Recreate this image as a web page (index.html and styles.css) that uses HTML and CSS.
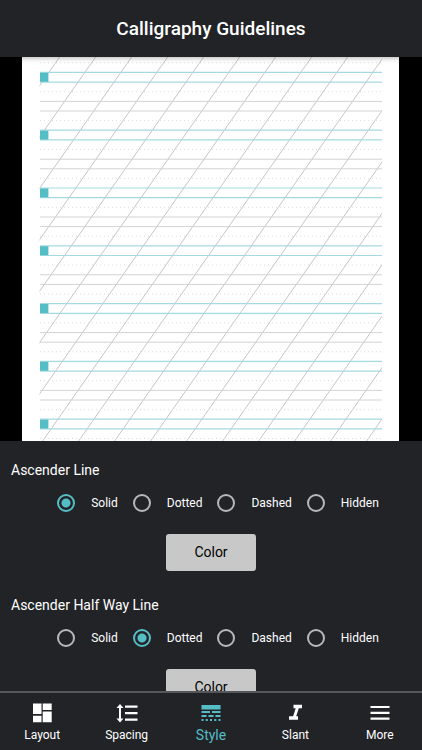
FILE: index.html
```
<!DOCTYPE html>
<html lang="en">
  <head>
    <meta charset="UTF-8" />
    <meta name="viewport" content="width=device-width, initial-scale=1.0" />
    <title>Calligraphy Guidelines</title>
    <link rel="stylesheet" href="styles.css">
  </head>
  <body>
    <header class="header">
      <h1>Calligraphy Guidelines</h1>
    </header>

    <div class="preview">
      <svg class="sheet" viewBox="0 0 377 384" role="img" aria-label="Guideline preview">
        <defs>
          <clipPath id="area">
            <rect x="17.5" y="0" width="342.5" height="384" />
          </clipPath>
          <g id="staff">
            <path class="main" d="M18 0H360M18 9.7H360" />
            <path class="dotted" d="M18 19.3H361M18 48.2H361" />
            <path class="minor" d="M18 29H360M18 38.6H360" />
            <rect class="nib" x="18" y="0.4" width="8.4" height="9" />
          </g>
        </defs>
        <path class="dotted" d="M18 5.8H361" />
        <g clip-path="url(#area)">
          <path class="slant" d="M37.6 0l-269 384M73.6 0l-269 384M109.6 0l-269 384M145.6 0l-269 384M181.6 0l-269 384M217.6 0l-269 384M253.6 0l-269 384M289.6 0l-269 384M325.6 0l-269 384M361.6 0l-269 384M397.6 0l-269 384M433.6 0l-269 384M469.6 0l-269 384M505.6 0l-269 384M541.6 0l-269 384M577.6 0l-269 384M613.6 0l-269 384" />
        </g>
        <use href="#staff" y="15.4" />
        <use href="#staff" y="73.2" />
        <use href="#staff" y="131" />
        <use href="#staff" y="188.8" />
        <use href="#staff" y="246.6" />
        <use href="#staff" y="304.4" />
        <use href="#staff" y="362.2" />
      </svg>
    </div>

    <main class="settings">
      <fieldset class="setting">
        <legend>Ascender Line</legend>
        <div class="options">
          <label><input type="radio" name="ascender" checked />Solid</label>
          <label><input type="radio" name="ascender" />Dotted</label>
          <label><input type="radio" name="ascender" />Dashed</label>
          <label><input type="radio" name="ascender" />Hidden</label>
        </div>
        <button type="button" class="color-btn">Color</button>
      </fieldset>

      <fieldset class="setting">
        <legend>Ascender Half Way Line</legend>
        <div class="options">
          <label><input type="radio" name="halfway" />Solid</label>
          <label><input type="radio" name="halfway" checked />Dotted</label>
          <label><input type="radio" name="halfway" />Dashed</label>
          <label><input type="radio" name="halfway" />Hidden</label>
        </div>
        <button type="button" class="color-btn">Color</button>
      </fieldset>
    </main>

    <nav class="tabs">
      <a href="#layout" class="tab">
        <svg viewBox="0 0 24 24"><path d="M3 2.5h8.500v10.500h-8.500zM12.700 2.500h9v6.500h-9zM3 14.800h8.500v6.500h-8.500zM12.700 10.500h9v10.800h-9z" /></svg>
        Layout
      </a>
      <a href="#spacing" class="tab">
        <svg viewBox="0 0 24 24"><path d="M6 7h2.500L5 3 1.500 7H4v10.500H1.500L5 21.500 8.500 17.500H6V7zm4-2.500v2.200h12.500V4.500H10zm0 15.300h12.500v-2.200H10v2.200zm0-6.600h12.500v-2.200H10v2.200z" /></svg>
        Spacing
      </a>
      <a href="#style" class="tab active">
        <svg viewBox="0 0 24 24"><path d="M2.500 4h19v4.500h-19zM2.500 10h8.500v2h-8.500zM13 10h8.500v2H13zM2.500 14h5v2h-5zM9.500 14h5v2h-5zM16.500 14h5v2h-5zM2.500 18h2v2h-2zM6.750 18h2v2h-2zM11 18h2v2h-2zM15.250 18h2v2h-2zM19.500 18h2v2h-2z" /></svg>
        Style
      </a>
      <a href="#slant" class="tab">
        <svg viewBox="0 0 24 24"><path d="M10.500 3.800v3.400h2.200l-2.600 8H6v3.500h9v-3.500h-1.800l2.600-8H19V3.800z" /></svg>
        Slant
      </a>
      <a href="#more" class="tab">
        <svg viewBox="0 0 24 24"><path d="M2.500 16.500h19v2.200h-19zM2.500 10.700h19v2.200h-19zM2.500 4.900h19v2.200h-19z" /></svg>
        More
      </a>
    </nav>
  </body>
</html>
```
FILE: styles.css
```
* {
  box-sizing: border-box;
}

body {
  display: flex;
  flex-direction: column;
  height: 100vh;
  margin: 0;
  background: #222327;
  color: white;
  font-family: Roboto, "Liberation Sans", sans-serif;
  overflow: hidden;
}

.header {
  position: relative;
  flex: none;
  padding: 16px 0 15px;
  text-align: center;
  box-shadow: 0 1px 5px rgba(0, 0, 0, 0.3);
}

.header h1 {
  margin: 0;
  font-size: 19px;
  line-height: 26px;
  font-weight: 500;
}

.preview {
  flex: none;
  padding: 0 23px 0 22px;
  background: black;
}

.sheet {
  display: block;
  width: 100%;
  background: white;
  fill: none;
}

.main {
  stroke: #a6d9df;
  stroke-width: 1.2;
}

.minor {
  stroke: #d3d3d5;
}

.dotted {
  stroke: #dddddf;
  stroke-dasharray: 1 3;
}

.slant {
  stroke: #c6c6c8;
}

.nib {
  fill: #55bdc6;
}

.settings {
  flex: 1;
  min-height: 0;
  padding: 20px 11px;
  overflow-y: auto;
  scrollbar-width: none;
}

.setting {
  min-width: 0;
  margin: 0 0 25px;
  padding: 0;
  border: 0;
}

.setting legend {
  padding: 0;
  font-size: 14px;
  line-height: 18px;
}

.options {
  display: flex;
  justify-content: center;
  gap: 15px;
  margin: 15px 0 22px;
  padding-left: 14px;
}

.options label {
  display: flex;
  align-items: center;
  gap: 16px;
  font-size: 12px;
  line-height: 18px;
}

.options input {
  appearance: none;
  width: 18px;
  height: 18px;
  margin: 0;
  border: 2px solid #b8b8bb;
  border-radius: 50%;
}

.options input:checked {
  border-color: #55bdc6;
  background: radial-gradient(circle, #55bdc6 4px, transparent 5px);
}

.color-btn {
  display: block;
  width: 90px;
  margin: 0 auto;
  padding: 8px 0;
  border: 0;
  border-radius: 3px;
  background: #c8c8c8;
  color: black;
  font-family: inherit;
  font-size: 14px;
  line-height: 21px;
}

.tabs {
  display: flex;
  flex: none;
  border-top: 2px solid #55565a;
}

.tab {
  display: flex;
  flex: 1;
  flex-direction: column;
  align-items: center;
  gap: 2px;
  padding: 8px 0 7px;
  color: white;
  font-size: 12px;
  line-height: 16px;
  text-decoration: none;
}

.tab svg {
  width: 24px;
  height: 24px;
  fill: currentColor;
}

.tab.active {
  color: #55bdc6;
  font-size: 14px;
}
```
